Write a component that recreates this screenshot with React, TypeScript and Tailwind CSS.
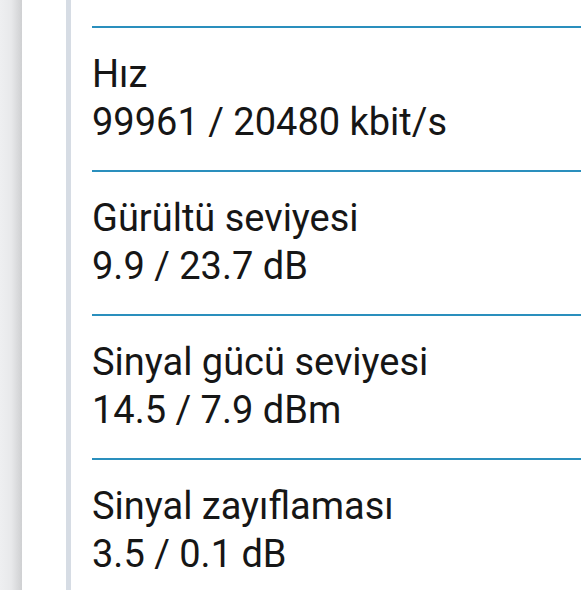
const rows = [
  { label: "Hız", value: "99961 / 20480 kbit/s" },
  { label: "Gürültü seviyesi", value: "9.9 / 23.7 dB" },
  { label: "Sinyal gücü seviyesi", value: "14.5 / 7.9 dBm" },
  { label: "Sinyal zayıflaması", value: "3.5 / 0.1 dB" },
];

function Row({ label, value }: { label: string; value: string }) {
  return (
    <div className="border-t-2 border-[#2a8fbd] pt-[22px] pb-[24px]">
      <div className="text-[38px] leading-[48px] text-[#161616]">{label}</div>
      <div className="text-[38px] leading-[48px] text-[#161616]">{value}</div>
    </div>
  );
}

export default function App() {
  return (
    <div className="flex h-[590px] w-full overflow-hidden bg-white font-['Roboto',sans-serif]">
      <div className="w-[22px] shrink-0 bg-gradient-to-r from-[#eeeff1] via-[#e8e9eb] to-[#cfd0d2]" />
      <div className="w-[44px] shrink-0 bg-white" />
      <div className="w-[5px] shrink-0 bg-[#d6dce4]" />
      <div className="flex-1 pl-[21px]">
        {/* tail of the previous row, mostly scrolled out of view */}
        <div className="flex h-[26px] flex-col justify-end overflow-hidden pb-[26px]">
          <div className="shrink-0 whitespace-nowrap text-[38px] leading-[48px] text-[#161616]">
            <span className="inline-block w-[209px]" />(<span className="inline-block w-[107px]" />)
          </div>
        </div>
        {rows.map((r) => (
          <Row key={r.label} label={r.label} value={r.value} />
        ))}
      </div>
    </div>
  );
}
